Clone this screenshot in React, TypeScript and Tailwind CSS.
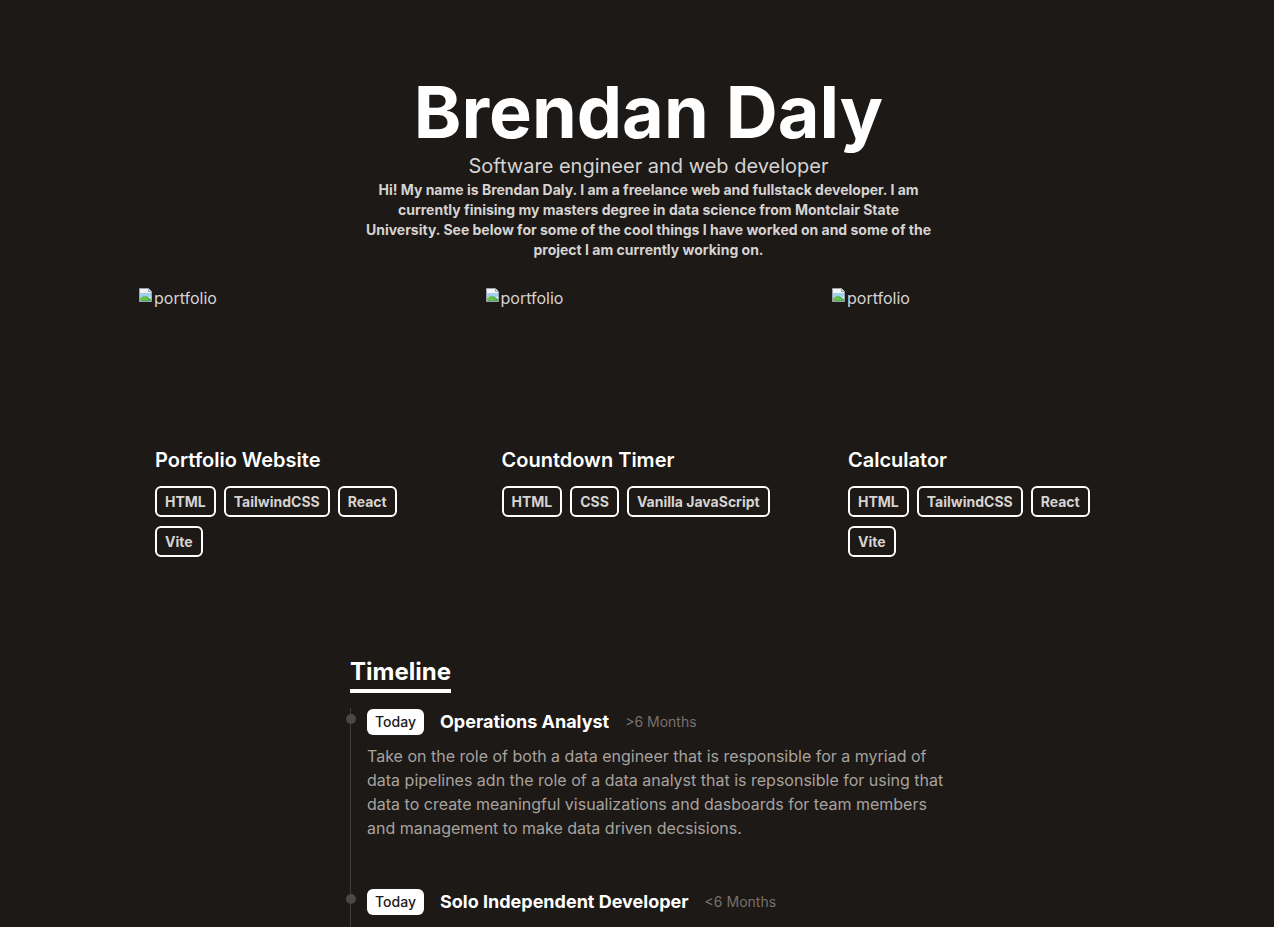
import React from 'react';

interface Project {
  title: string;
  tags: string[];
}

interface Job {
  title: string;
  length: string;
  text: string;
}

const PROJECTS: Project[] = [
  { title: 'Portfolio Website', tags: ['HTML', 'TailwindCSS', 'React', 'Vite'] },
  { title: 'Countdown Timer', tags: ['HTML', 'CSS', 'Vanilla JavaScript'] },
  { title: 'Calculator', tags: ['HTML', 'TailwindCSS', 'React', 'Vite'] },
];

const JOBS: Job[] = [
  {
    title: 'Operations Analyst',
    length: '>6 Months',
    text: 'Take on the role of both a data engineer that is responsible for a myriad of data pipelines adn the role of a data analyst that is repsonsible for using that data to create meaningful visualizations and dasboards for team members and management to make data driven decsisions.',
  },
  {
    title: 'Solo Independent Developer',
    length: '<6 Months',
    text: 'Build websites and full stack applications for small businesses and individual clients, from the first design to the final deployment.',
  },
];

function BrokenImage() {
  return (
    <svg width="16" height="16" viewBox="0 0 16 16" className="shrink-0">
      <path d="M1.5 1.5h9l3 3v10h-12z" fill="#f4f4f4" stroke="#9aa3ad" />
      <path d="M10.5 1.5v3h3" fill="#dcdcdc" stroke="#9aa3ad" />
      <path d="M2 6h11v3.5L2 14z" fill="#9fd0f2" />
      <path d="M2 14l6-5 5 3v2z" fill="#4caf50" />
      <path d="M2 11.5l4-3 5 4.5H2z" fill="#6cc04a" />
    </svg>
  );
}

function ProjectCard({ project }: { project: Project }) {
  return (
    <div className="w-80">
      <div className="h-[159px] flex items-start text-[#d6d3d1] text-base leading-6">
        <BrokenImage />
        <span className="-mt-[1px]">portfolio</span>
      </div>
      <div className="pl-[17px] pr-4">
        <h3 className="text-xl leading-7 font-semibold text-white">{project.title}</h3>
        <div className="mt-[12px] flex flex-wrap gap-x-2 gap-y-[9px]">
          {project.tags.map((tag) => (
            <span
              key={tag}
              className="h-[31px] px-2 flex items-center border-2 border-white rounded-md text-sm font-bold text-[#d6d3d1]"
            >
              {tag}
            </span>
          ))}
        </div>
      </div>
    </div>
  );
}

export default function App() {
  return (
    <div
      className="min-h-screen bg-[#1c1917] text-white"
      style={{ fontFamily: 'Inter, "Noto Sans", sans-serif' }}
    >
      {/* Hero */}
      <header className="pl-[23px] pt-[72px] flex flex-col items-center text-center">
        <h1 className="text-7xl leading-[80px] font-bold">Brendan Daly</h1>
        <p className="text-xl leading-7 text-[#d6d3d1]">Software engineer and web developer</p>
        <p className="max-w-xl text-sm leading-5 font-bold text-[#d6d3d1]">
          Hi! My name is Brendan Daly. I am a freelance web and fullstack developer. I am currently finising my
          masters degree in data science from Montclair State University. See below for some of the cool things I
          have worked on and some of the project I am currently working on.
        </p>
      </header>

      {/* Projects */}
      <section className="pl-[138px] mt-[27px] grid grid-cols-[320px_320px_320px] gap-x-[26.5px]">
        {PROJECTS.map((p) => (
          <ProjectCard key={p.title} project={p} />
        ))}
      </section>

      {/* Timeline */}
      <section className="pl-[350px] mt-[99px]">
        <h2 className="inline-block text-2xl leading-8 font-bold border-b-4 border-white pb-[1px]">Timeline</h2>
        <ol className="mt-[15px] border-l border-[#3f3c3a] max-w-[620px]">
          {JOBS.map((job) => (
            <li key={job.title} className="relative pl-[16px] pb-[48px]">
              <span className="absolute -left-[5.5px] top-[6px] w-[10px] h-[10px] rounded-full bg-[#4b4846]" />
              <div className="h-7 flex items-center">
                <span className="h-[26px] flex items-center bg-white text-[#1c1917] text-sm font-medium rounded-md px-2">
                  Today
                </span>
                <h3 className="ml-4 text-lg leading-7 font-bold text-white">{job.title}</h3>
                <span className="ml-4 text-sm text-[#78716c]">{job.length}</span>
              </div>
              <p className="mt-2 max-w-[590px] text-base leading-6 text-[#a8a29e]">{job.text}</p>
            </li>
          ))}
        </ol>
      </section>
    </div>
  );
}
